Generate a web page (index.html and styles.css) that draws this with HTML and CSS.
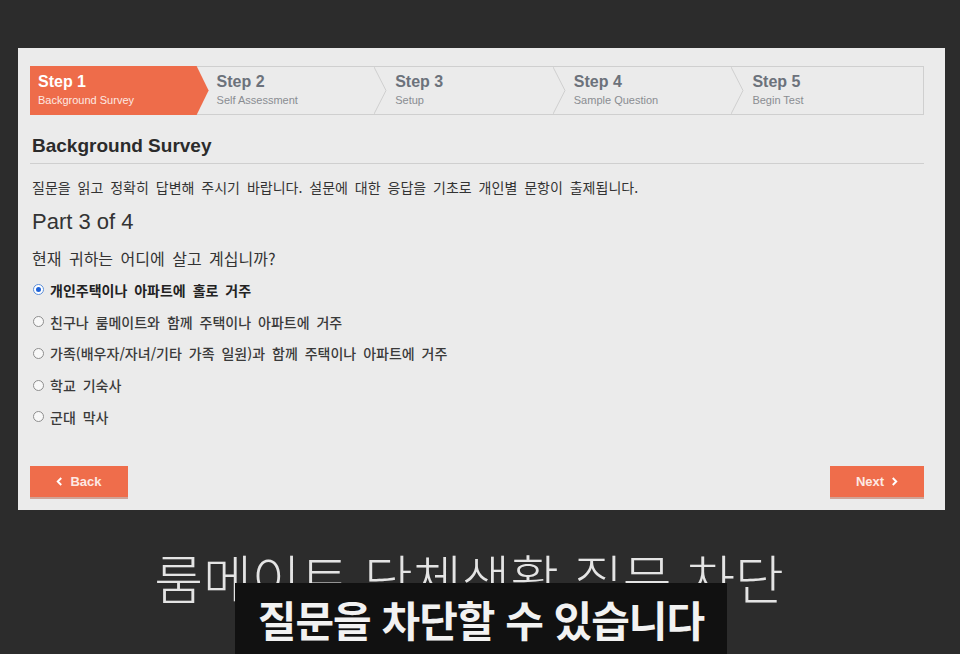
FILE: index.html
```html
<!DOCTYPE html>
<html lang="ko">
<head>
  <meta charset="UTF-8" />
  <title>Background Survey</title>
  <link rel="stylesheet" href="styles.css">
</head>
<body>
  <!-- Survey panel -->
  <div class="panel">
    <div class="steps">
      <div class="step active">
        <div class="step-title">Step 1</div>
        <div class="step-sub">Background Survey</div>
      </div>
      <div class="step">
        <div class="step-title">Step 2</div>
        <div class="step-sub">Self Assessment</div>
        <svg class="chev" viewBox="0 0 13 47" preserveAspectRatio="none"><polyline points="0,0 12,23.5 0,47" fill="none" stroke="#cfcfcf" stroke-width="1"/></svg>
      </div>
      <div class="step">
        <div class="step-title">Step 3</div>
        <div class="step-sub">Setup</div>
        <svg class="chev" viewBox="0 0 13 47" preserveAspectRatio="none"><polyline points="0,0 12,23.5 0,47" fill="none" stroke="#cfcfcf" stroke-width="1"/></svg>
      </div>
      <div class="step">
        <div class="step-title">Step 4</div>
        <div class="step-sub">Sample Question</div>
        <svg class="chev" viewBox="0 0 13 47" preserveAspectRatio="none"><polyline points="0,0 12,23.5 0,47" fill="none" stroke="#cfcfcf" stroke-width="1"/></svg>
      </div>
      <div class="step">
        <div class="step-title">Step 5</div>
        <div class="step-sub">Begin Test</div>
      </div>
    </div>

    <h2 class="title">Background Survey</h2>
    <p class="intro">질문을 읽고 정확히 답변해 주시기 바랍니다. 설문에 대한 응답을 기초로 개인별 문항이 출제됩니다.</p>
    <div class="part">Part 3 of 4</div>
    <p class="question">현재 귀하는 어디에 살고 계십니까?</p>

    <ul class="options">
      <li class="option selected"><span class="radio"></span>개인주택이나 아파트에 홀로 거주</li>
      <li class="option"><span class="radio"></span>친구나 룸메이트와 함께 주택이나 아파트에 거주</li>
      <li class="option"><span class="radio"></span>가족(배우자/자녀/기타 가족 일원)과 함께 주택이나 아파트에 거주</li>
      <li class="option"><span class="radio"></span>학교 기숙사</li>
      <li class="option"><span class="radio"></span>군대 막사</li>
    </ul>

    <div class="nav">
      <button class="btn back">
        <svg viewBox="0 0 8 10" width="7" height="9"><polyline points="6,1 2,5 6,9" fill="none" stroke="#fff" stroke-width="2.2"/></svg>
        Back
      </button>
      <button class="btn next">
        Next
        <svg viewBox="0 0 8 10" width="7" height="9"><polyline points="2,1 6,5 2,9" fill="none" stroke="#fff" stroke-width="2.2"/></svg>
      </button>
    </div>
  </div>

  <!-- Video captions -->
  <div class="captions">
    <div class="cap-main">룸메이트 단체생활 질문 차단</div>
    <div class="cap-box">질문을 차단할 수 있습니다</div>
  </div>
</body>
</html>
```

FILE: styles.css
```css
html, body { margin:0; padding:0; }
body {
  background:#2c2c2c;
  font-family:"Liberation Sans", "Noto Sans CJK KR", sans-serif;
  color:#333;
  height:654px;
  overflow:hidden;
  position:relative;
}
/* Panel */
.panel {
  margin:48px 15px 0 18px;
  width:927px;
  height:462px;
  box-sizing:border-box;
  background:#ebebeb;
  padding:18px 21px 0 12px;
}
/* Stepper */
.steps {
  display:flex;
  height:49px;
  border:1px solid #cfcfcf;
  box-sizing:border-box;
  background:#ebebeb;
}
.step {
  flex:1;
  position:relative;
  padding:6px 0 0 8px;
  color:#6c727b;
}
.step.active {
  background:#ee6c4a;
  color:#fff;
  margin:-1px 0 -1px -1px;
  padding:7px 0 0 8px;
  clip-path:polygon(0 0, calc(100% - 12px) 0, 100% 50%, calc(100% - 12px) 100%, 0 100%);
}
.step-title { font-weight:bold; font-size:16px; line-height:18px; }
.step-sub { font-size:11px; line-height:14px; margin-top:2px; color:#8a8d92; }
.step.active .step-sub { color:#fde9e2; }
.chev {
  position:absolute;
  right:0;
  top:0;
  width:13px;
  height:100%;
}
/* Content */
.title {
  margin:19px 0 0;
  font-size:19px;
  line-height:24px;
  font-weight:bold;
  color:#2b2b2b;
  padding:0 0 5px 2px;
  border-bottom:1px solid #cfcfcf;
}
.intro {
  margin:13px 0 0 2px;
  font-family:"Noto Sans CJK KR", sans-serif;
  font-size:14px;
  word-spacing:3px;
  line-height:20px;
  color:#333;
}
.part {
  margin:11px 0 0 2px;
  font-size:22px;
  line-height:28px;
  color:#333;
}
.question {
  margin:11px 0 0 2px;
  font-family:"Noto Sans CJK KR", sans-serif;
  font-size:16px;
  word-spacing:3px;
  line-height:22px;
  color:#333;
}
.options { list-style:none; margin:5px 0 0; padding:0; }
.option {
  display:flex;
  align-items:center;
  height:31.75px;
  padding-left:3px;
  font-family:"Noto Sans CJK KR", sans-serif;
  font-size:14px;
  word-spacing:3px;
  color:#3a3a3a;
  font-weight:500;
  white-space:pre;
}
.option.selected { font-weight:bold; color:#222; }
.radio {
  width:9px;
  height:9px;
  border:1px solid #8e8e8e;
  border-radius:50%;
  background:#f8f8f8;
  margin-right:6px;
  flex:none;
  position:relative;
}
.selected .radio { border-color:#5d8fd8; background:#fff; }
.selected .radio::after {
  content:"";
  position:absolute;
  left:2px; top:2px;
  width:5px; height:5px;
  border-radius:50%;
  background:#1d62d8;
}
/* Buttons */
.nav {
  display:flex;
  justify-content:space-between;
  margin-top:33px;
}
.btn {
  height:31px;
  border:none;
  background:#ef6d4b;
  box-shadow:0 2px 0 #cfa497;
  color:#fde9e4;
  font-family:"Liberation Sans", sans-serif;
  font-weight:bold;
  font-size:13px;
  display:flex;
  align-items:center;
  justify-content:center;
  gap:7px;
  padding:0;
}
.btn.back { width:98px; }
.btn.next { width:94px; }
/* Captions */
.captions { position:relative; height:144px; padding-top:37px; box-sizing:border-box; }
.cap-main {
  text-align:center;
  padding-right:22px;
  font-family:"Noto Sans CJK KR", sans-serif;
  font-weight:300;
  font-size:53px;
  line-height:60px;
  color:#e4e4e4;
}
.cap-box {
  position:absolute;
  left:235px;
  top:73px;
  width:492px;
  height:72px;
  background:#111;
  color:#f2f2f2;
  font-family:"Noto Sans CJK KR", sans-serif;
  font-weight:bold;
  font-size:42px;
  letter-spacing:-1px;
  line-height:72px;
  text-align:center;
}
```
